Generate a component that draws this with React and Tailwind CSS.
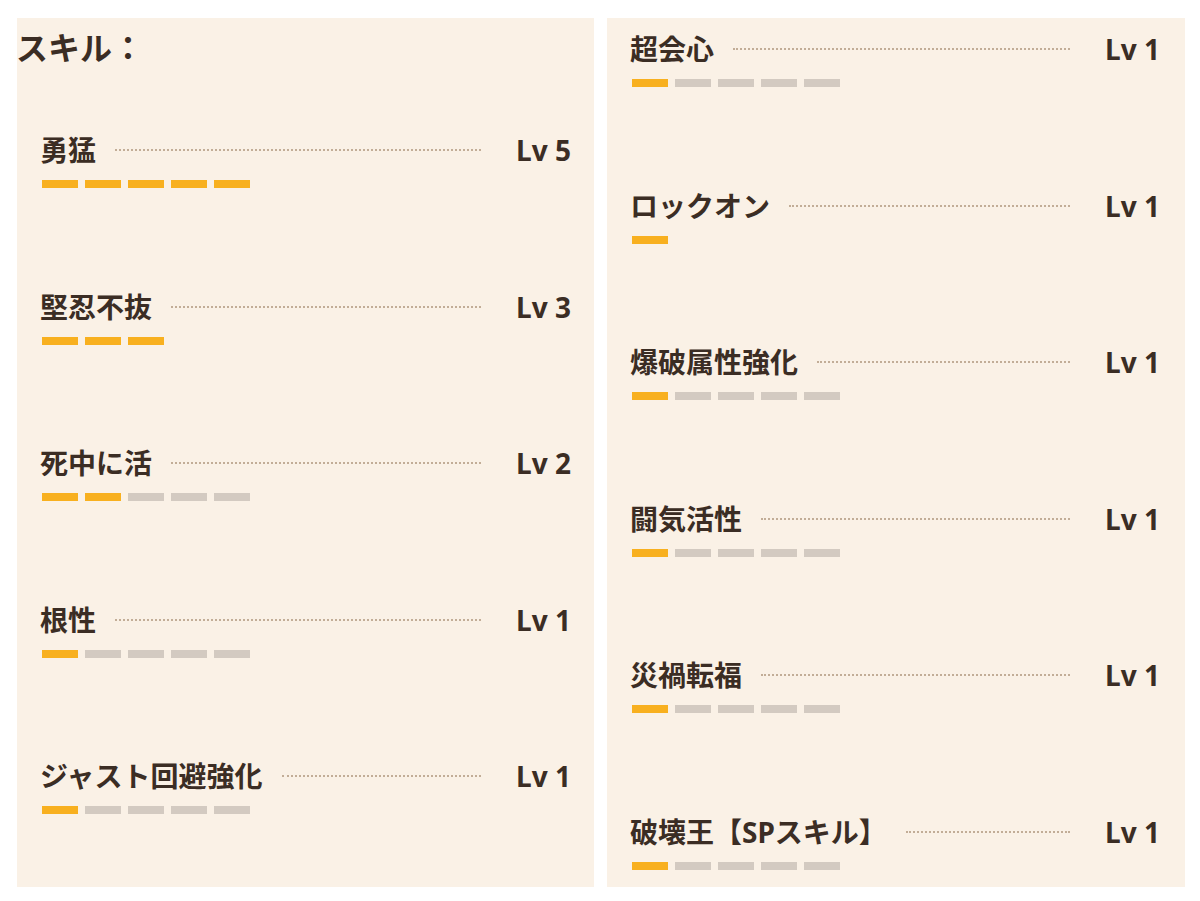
const left = [
  { name: "勇猛", lv: 5, bars: 5 },
  { name: "堅忍不抜", lv: 3, bars: 3 },
  { name: "死中に活", lv: 2, bars: 5 },
  { name: "根性", lv: 1, bars: 5 },
  { name: "ジャスト回避強化", lv: 1, bars: 5 },
];

const right = [
  { name: "超会心", lv: 1, bars: 5 },
  { name: "ロックオン", lv: 1, bars: 1 },
  { name: "爆破属性強化", lv: 1, bars: 5 },
  { name: "闘気活性", lv: 1, bars: 5 },
  { name: "災禍転福", lv: 1, bars: 5 },
  { name: "破壊王【SPスキル】", lv: 1, bars: 5 },
];

function SkillRow({ name, lv, bars }) {
  return (
    <div className="h-[156.6px] flex flex-col">
      <div className="h-[40px] flex items-center">
        <span className="text-[28px] font-bold leading-none whitespace-nowrap">{name}</span>
        <div className="flex-1 ml-[19px] border-t-2 border-dotted border-[#c2ad97]" />
        <span className="w-[90px] text-right text-[28px] font-bold leading-none">Lv {lv}</span>
      </div>
      <div className="mt-[10px] ml-[2px] flex gap-[7px]">
        {Array.from({ length: bars }).map((_, i) => (
          <div
            key={i}
            className={i < lv ? "w-[36px] h-[8px] bg-[#f8b01f]" : "w-[36px] h-[8px] bg-[#d3cac1]"}
          />
        ))}
      </div>
    </div>
  );
}

export default function App() {
  return (
    <div
      className="h-[901px] overflow-hidden bg-white pl-[17px] pt-[18px] flex items-start gap-[13px] text-[#3b2d24]"
      style={{ fontFamily: '"Noto Sans", "Noto Sans CJK JP", sans-serif' }}
    >
      <div className="w-[577px] h-[869px] overflow-hidden bg-[#faf1e6] pr-[23px]">
        <div className="pt-[10px] h-[50px] -ml-[1px] text-[32px] font-bold leading-[40px] whitespace-nowrap">スキル：</div>
        <div className="mt-[62px] pl-[23px]">
          {left.map((s) => (
            <SkillRow key={s.name} {...s} />
          ))}
        </div>
      </div>
      <div className="w-[578px] h-[869px] overflow-hidden bg-[#faf1e6] pl-[23px] pr-[25px] pt-[11px]">
        {right.map((s) => (
          <SkillRow key={s.name} {...s} />
        ))}
      </div>
    </div>
  );
}
